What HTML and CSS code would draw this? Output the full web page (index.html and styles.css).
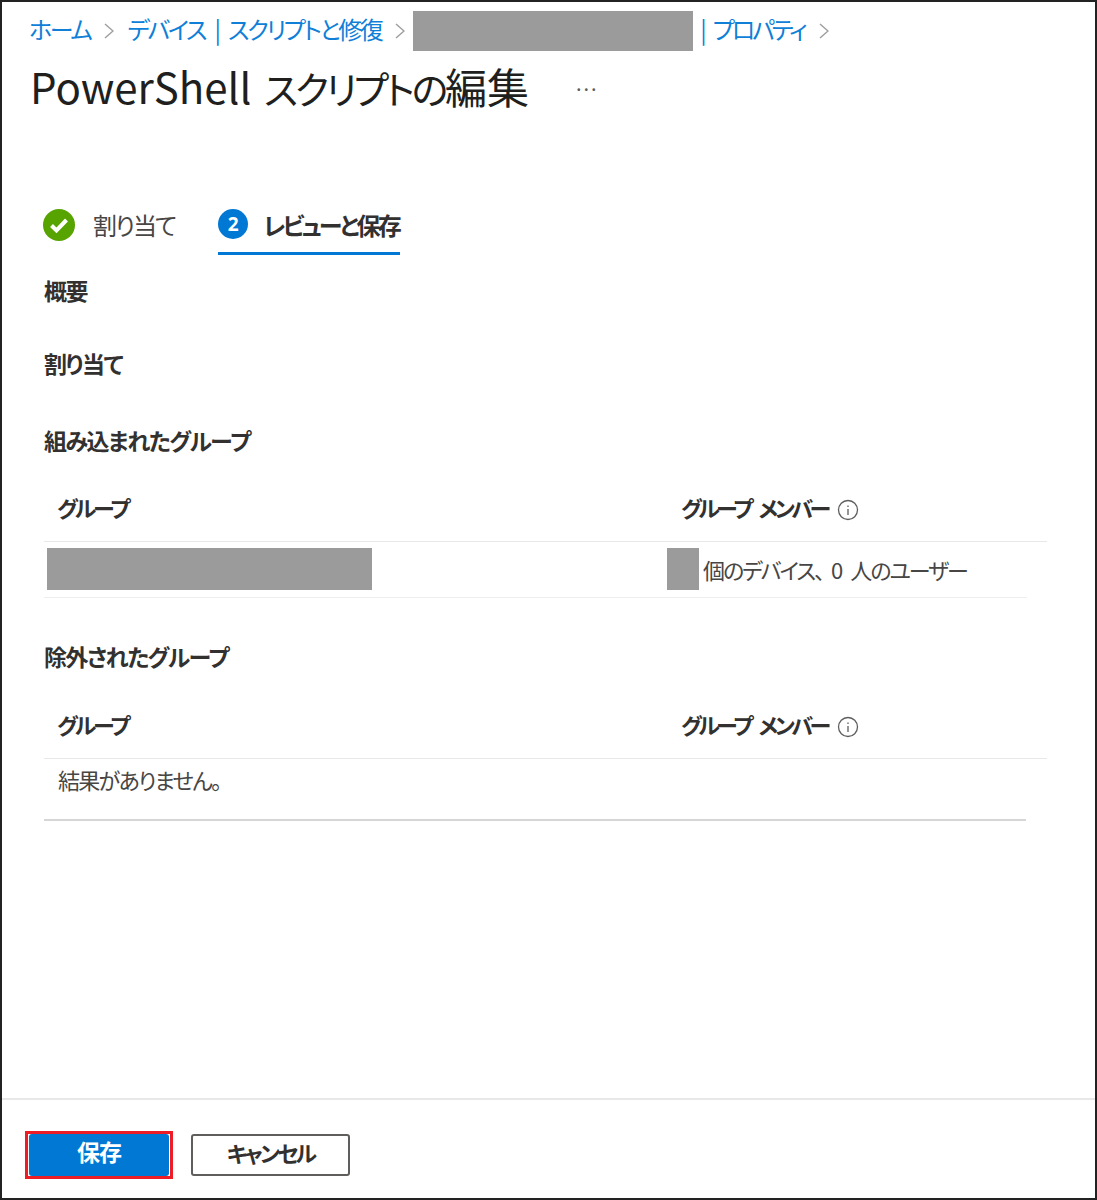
FILE: index.html
```html
<!DOCTYPE html>
<html lang="ja">

<head>
    <meta charset="utf-8">
    <title>PowerShell スクリプトの編集</title>
    <link rel="stylesheet" href="styles.css">
</head>

<body>
    <div class="frame">
        <div class="crumbs">
            <a class="crumb">ホーム</a>
            <svg class="chev" viewBox="0 0 10 16"><path d="M1 1l8 7-8 7" /></svg>
            <a class="crumb">デバイス | スクリプトと修復</a>
            <svg class="chev" viewBox="0 0 10 16"><path d="M1 1l8 7-8 7" /></svg>
            <div class="mask mask-crumb"></div>
            <a class="crumb crumb-last">| プロパティ</a>
            <svg class="chev" viewBox="0 0 10 16"><path d="M1 1l8 7-8 7" /></svg>
        </div>
        <div class="title-row">
            <h1 class="title">PowerShell <span class="title-kana">スクリプトの</span>編集</h1>
            <span class="more">...</span>
        </div>

        <div class="steps">
            <div class="step">
                <svg class="step-icon" viewBox="0 0 32 32">
                    <circle cx="16" cy="16" r="16" fill="#57a300" />
                    <path d="M8.500 16.500l5 5 10-10.500" fill="none" stroke="#fff" stroke-width="4" />
                </svg>
                <span class="step-label">割り当て</span>
            </div>
            <div class="step step-active">
                <span class="step-num">2</span>
                <span class="step-label">レビューと保存</span>
            </div>
        </div>

        <div class="content">
            <h2 class="sub sub-first">概要</h2>
            <h2 class="sub sub-assign">割り当て</h2>
            <h2 class="sub sub-group">組み込まれたグループ</h2>

            <div class="thead">
                <div class="col-a">グループ</div>
                <div class="col-b">
                    <span>グループ メンバー</span>
                    <svg class="info" viewBox="0 0 22 22">
                        <circle cx="11" cy="11" r="9.500" />
                        <path d="M11 10v6M11 6.500v1.500" />
                    </svg>
                </div>
            </div>
            <div class="trow">
                <div class="mask mask-name"></div>
                <div class="mask mask-count"></div>
                <span class="cell">個のデバイス<span class="comma">、</span>0 人のユーザー</span>
            </div>

            <h2 class="sub sub-excl">除外されたグループ</h2>

            <div class="thead thead-excl">
                <div class="col-a">グループ</div>
                <div class="col-b">
                    <span>グループ メンバー</span>
                    <svg class="info" viewBox="0 0 22 22">
                        <circle cx="11" cy="11" r="9.500" />
                        <path d="M11 10v6M11 6.500v1.500" />
                    </svg>
                </div>
            </div>
            <div class="empty">結果がありません。</div>
        </div>

        <div class="footer">
            <div class="highlight">
                <button class="btn btn-primary">保存</button>
            </div>
            <button class="btn">キャンセル</button>
        </div>
    </div>
</body>

</html>
```

FILE: styles.css
```css
html,
body {
    margin: 0;
    padding: 0;
    background: #fff;
}

body {
    font-family: "Noto Sans CJK JP", "Noto Sans", sans-serif;
    font-feature-settings: "palt";
    color: #323130;
}

.frame {
    width: 1097px;
    height: 1200px;
    box-sizing: border-box;
    border: 2px solid #222;
    display: flex;
    flex-direction: column;
}

.mask {
    background: #9b9b9b;
    flex: none;
}

/* breadcrumb */
.crumbs {
    display: flex;
    align-items: center;
    height: 40px;
    margin-top: 9px;
    padding-left: 27px;
    color: #0f7fd8;
    font-size: 24px;
    letter-spacing: -2.400px;
    word-spacing: 6.500px;
    white-space: nowrap;
}

.crumb {
    padding-bottom: 5px;
}

.crumb-last {
    letter-spacing: -3px;
}

.chev {
    width: 10px;
    height: 16px;
    margin: 0 13px 0 14px;
    fill: none;
    stroke: #a19f9d;
    stroke-width: 1.500;
    flex: none;
}

.mask-crumb {
    width: 280px;
    height: 40px;
    margin-right: 7px;
    margin-left: -5px;
}

.title-row {
    display: flex;
    align-items: center;
    height: 56px;
    margin-top: 9px;
    padding-left: 28px;
}

.title {
    margin: 0;
    padding-bottom: 6px;
    font-size: 42px;
    font-weight: 400;
    word-spacing: 3px;
    color: #201f1e;
    white-space: nowrap;
}

.title-kana {
    font-size: 38px;
    letter-spacing: -3.200px;
}

.more {
    margin-left: 47px;
    padding-bottom: 12px;
    font-size: 20px;
    letter-spacing: 2px;
    color: #605e5c;
}

/* wizard steps */
.steps {
    display: flex;
    margin-top: 79px;
    margin-left: 41px;
}

.step {
    display: flex;
    align-items: center;
    height: 60px;
    margin-right: 43px;
    gap: 18px;
    font-size: 24px;
    letter-spacing: -2px;
    color: #484644;
}

.step-icon {
    width: 32px;
    height: 32px;
}

.step-label {
    padding-bottom: 2px;
}

.step-active {
    gap: 15px;
    font-weight: 700;
    letter-spacing: -2.900px;
    color: #323130;
    border-bottom: 3px solid #0078d4;
    box-sizing: border-box;
    padding-right: 1px;
}

.step-active .step-label {
    padding-bottom: 0;
    padding-top: 1px;
}

.step-num {
    width: 30px;
    height: 30px;
    border-radius: 50%;
    background: #0078d4;
    color: #fff;
    font-family: "Open Sans", sans-serif;
    font-size: 19px;
    line-height: 30px;
    text-align: center;
    letter-spacing: 0;
}

/* review content */
.content {
    margin-left: 42px;
    flex: 1;
}

.sub {
    margin: 0;
    font-size: 23px;
    line-height: 30px;
    font-weight: 700;
    letter-spacing: -1.500px;
    color: #323130;
}

.sub-first {
    margin-top: 20px;
}

.sub-assign {
    margin-top: 43px;
}

.sub-group {
    margin-top: 47px;
}

.sub-excl {
    margin-top: 43px;
}

.thead {
    display: flex;
    align-items: center;
    width: 1003px;
    height: 67px;
    padding-bottom: 2px;
    border-bottom: 1px solid #e8e8e8;
    font-size: 22px;
    font-weight: 700;
    letter-spacing: -3px;
    color: #323130;
    margin-top: 20px;
    box-sizing: border-box;
}

.thead-excl {
    margin-top: 21px;
}

.col-a {
    width: 637px;
    padding-left: 13px;
    box-sizing: border-box;
}

.col-b {
    display: flex;
    align-items: center;
    gap: 9px;
    letter-spacing: -3.400px;
    word-spacing: 7px;
}

.info {
    width: 22px;
    height: 22px;
    margin-top: 5px;
    fill: none;
    stroke: #605e5c;
    stroke-width: 1.300;
}

.trow {
    display: flex;
    align-items: center;
    width: 983px;
    height: 56px;
    border-bottom: 1px solid #eee;
    box-sizing: border-box;
    font-size: 22px;
    letter-spacing: -2px;
    color: #484644;
}

.mask-name {
    width: 325px;
    height: 42px;
    margin-left: 3px;
    margin-bottom: 2px;
}

.mask-count {
    width: 32px;
    height: 42px;
    margin-left: 295px;
    margin-bottom: 2px;
}

.cell {
    margin-left: 4px;
    margin-bottom: 2px;
    word-spacing: 6px;
}

.comma {
    margin-right: 8px;
}

.empty {
    width: 982px;
    height: 62px;
    padding: 4px 0 0 14px;
    box-sizing: border-box;
    border-bottom: 2px solid #d6d6d6;
    font-size: 22px;
    letter-spacing: -1.700px;
    color: #484644;
}

/* footer buttons */
.footer {
    height: 100px;
    box-sizing: border-box;
    border-top: 2px solid #e8e8e8;
    padding: 30px 0 18px 23px;
    display: flex;
    align-items: center;
    gap: 18px;
}

.highlight {
    border: 3px solid #ee1c25;
    padding: 0 1px;
    flex: none;
}

.btn {
    display: block;
    width: 159px;
    height: 42px;
    background: #fff;
    border: 2px solid #605e5c;
    border-radius: 3px;
    font-family: inherit;
    font-feature-settings: inherit;
    font-size: 22px;
    font-weight: 700;
    letter-spacing: -2.800px;
    color: #323130;
    padding: 0 0 8px;
}

.btn-primary {
    width: 140px;
    background: #0078d4;
    border: none;
    font-size: 23px;
    letter-spacing: -1px;
    color: #fff;
}
```
